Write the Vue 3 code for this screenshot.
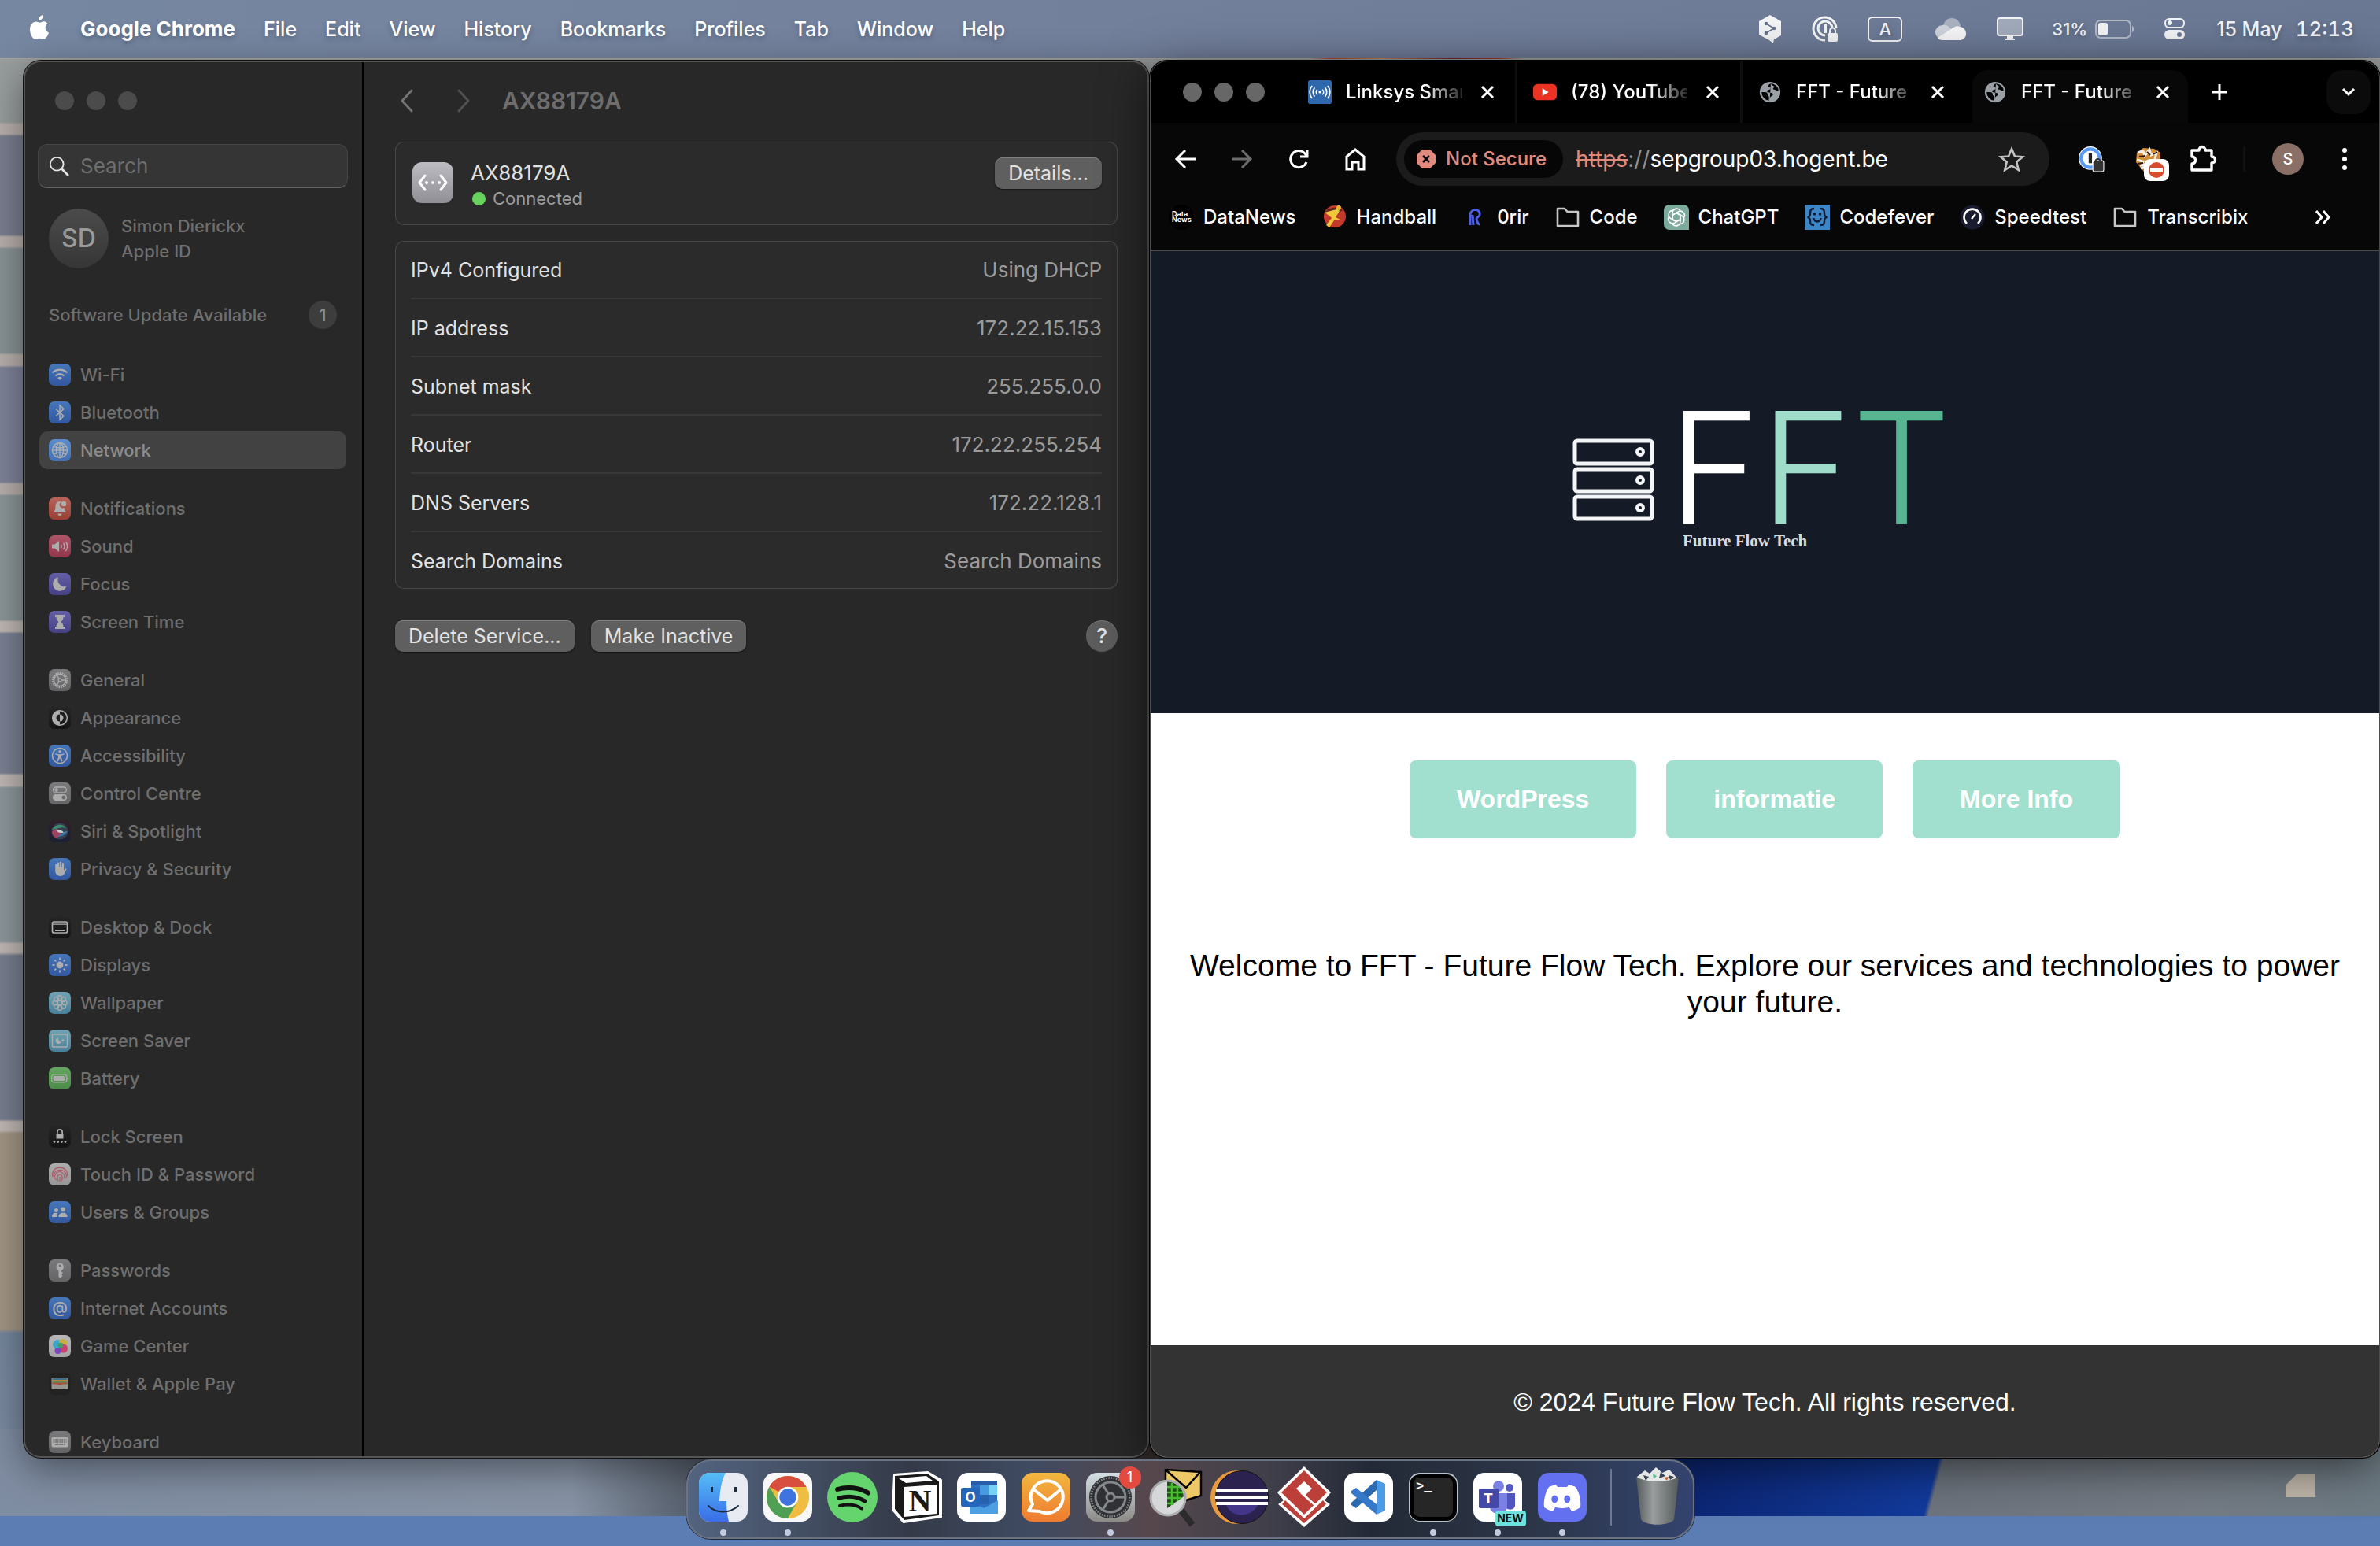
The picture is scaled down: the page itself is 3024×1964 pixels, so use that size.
<script setup>
const menus = ['File', 'Edit', 'View', 'History', 'Bookmarks', 'Profiles', 'Tab', 'Window', 'Help']

const g = {
  wifi: '<g fill="none" stroke="currentColor" stroke-width="2.4"><path d="M4.5 11.5a13.5 13.5 0 0 1 19 0"/><path d="M8.5 15.5a8 8 0 0 1 11 0"/></g><path d="M11.2 18.2a4 4 0 0 1 5.6 0L14 21z"/>',
  bluetooth: '<path d="M9 9.5l10 9-5 4.500V5l5 4.500-10 9" fill="none" stroke="currentColor" stroke-width="1.500"/>',
  globe: '<g fill="none" stroke="currentColor" stroke-width="1.400"><circle cx="14" cy="14" r="9.500"/><ellipse cx="14" cy="14" rx="4.500" ry="9.500"/><path d="M14 4.500v19M4.500 14h19M6 9c5 2.500 11 2.500 16 0M6 19c5-2.500 11-2.500 16 0"/></g>',
  bell: '<path d="M14 5c-4 0-5.500 3-5.500 6.500 0 4-1 5.500-3 7.500h17c-2-2-3-3.500-3-6a4 4 0 0 1-3.500-7.500A6 6 0 0 0 14 5zM11.500 20.500h5a2.500 2.500 0 0 1-5 0z"/><circle cx="19" cy="8" r="3.200"/>',
  sound: '<path d="M4 11.500h3.500L13 7v14l-5.500-4.500H4z"/><g fill="none" stroke="currentColor" stroke-width="1.500"><path d="M15.500 12a3.500 3.500 0 0 1 0 4M18.500 10a6.500 6.500 0 0 1 0 8M21.500 8a10 10 0 0 1 0 12"/></g>',
  moon: '<path d="M12 5a9 9 0 1 0 10.500 12A9 9 0 0 1 12 5z"/>',
  hourglass: '<path d="M8 5h12v3h-1.500c0 3-1.500 4.500-3 6 1.500 1.500 3 3 3 6H20v3H8v-3h1.500c0-3 1.500-4.500 3-6-1.500-1.500-3-3-3-6H8z"/>',
  gear: '<g fill="none" stroke="currentColor"><circle cx="14" cy="14" r="9" stroke-width="2.400" stroke-dasharray="1.700 1.100"/><circle cx="14" cy="14" r="7.500" stroke-width="1.400"/><circle cx="14" cy="14" r="2" stroke-width="1.300"/><path d="M16 14h6M13 12.300L10 7M13 15.700L10 21" stroke-width="1.300"/></g>',
  appearance: '<circle cx="14" cy="14" r="9.300" fill="none" stroke="currentColor" stroke-width="1.600"/><path d="M14 4.700a9.300 9.300 0 0 0 0 18.600v-4.800a4.500 4.500 0 0 1 0-9z"/><path d="M14 9.500a4.500 4.500 0 0 1 0 9z"/>',
  access: '<circle cx="14" cy="14" r="9.500" fill="none" stroke="currentColor" stroke-width="1.600"/><circle cx="14" cy="8.800" r="1.700"/><path d="M8.500 11.300l4 .9h3l4-.9.300 1.300-3.800 1.200v2.500l1.500 4.700-1.300.5L14 17l-2.200 4.500-1.300-.5 1.500-4.700v-2.500l-3.800-1.200z"/>',
  control: '<rect x="5.500" y="6" width="17" height="7" rx="3.500" fill="none" stroke="currentColor" stroke-width="1.300"/><circle cx="9.500" cy="9.500" r="2.200"/><path fill-rule="evenodd" d="M9 15h10a4 4 0 0 1 0 8H9a4 4 0 0 1 0-8zm10 1.500a2.500 2.500 0 1 0 0 5 2.500 2.500 0 0 0 0-5z"/>',
  siri: '<circle cx="14" cy="14" r="10.500" fill="#34404f"/><path d="M4 12c3-7 14-9 18-2-6-2-10 1-18 2z" fill="#3d8a72"/><path d="M4 15c4-6 8-4 11-1 2 4-3 9-6 8-3-1-5-4-5-7z" fill="#a0405f"/><path d="M24 14c-3 5-9 8-13 6 5-1 6-6 13-6z" fill="#3a79a8"/><path d="M9 12.500c4-1 8 0 10 3-4 1-7 1-10-3z" fill="#c4cfd2"/>',
  hand: '<path d="M8.200 13V8.500a1.100 1.100 0 0 1 2.200 0V12h.6V6.300a1.200 1.200 0 0 1 2.300 0V12h.6V5.300a1.200 1.200 0 0 1 2.300 0V12h.6V7a1.100 1.100 0 0 1 2.200 0v8.500l1.500-1.800c1-1 2.400-.2 1.800 1-1.500 3-3 8.300-7.300 8.300-4.500 0-6.800-3-6.800-7z"/>',
  dock: '<rect x="4.500" y="7" width="19" height="14" rx="2" fill="none" stroke="currentColor" stroke-width="1.700"/><path d="M5 9.500h18v1.200H5zM8 17h12v2H8z"/>',
  sun: '<circle cx="14" cy="14" r="4.400"/><path d="M14 4.500v3M14 20.500v3M4.500 14h3M20.500 14h3M7.300 7.300l2 2M18.700 18.700l2 2M20.700 7.300l-2 2M7.300 20.700l2-2" stroke="currentColor" stroke-width="1.800"/>',
  flower: '<g fill="none" stroke="currentColor" stroke-width="1.200"><circle cx="14" cy="14" r="2.800"/><circle cx="14" cy="7.700" r="3"/><circle cx="14" cy="20.300" r="3"/><circle cx="7.700" cy="14" r="3"/><circle cx="20.300" cy="14" r="3"/><circle cx="9.500" cy="9.500" r="3"/><circle cx="18.500" cy="9.500" r="3"/><circle cx="9.500" cy="18.500" r="3"/><circle cx="18.500" cy="18.500" r="3"/></g>',
  saver: '<rect x="4.500" y="6" width="19" height="16" rx="1" fill="none" stroke="currentColor" stroke-width="1.400"/><path d="M12 10a4 4 0 1 0 4 6 5 5 0 0 1-4-6zM18 11l.7 1.800 1.800.7-1.800.7-.7 1.800-.7-1.800-1.800-.7 1.800-.7z"/>',
  battery: '<rect x="3.700" y="9" width="19" height="10" rx="3" fill="none" stroke="currentColor" stroke-width="1.200"/><rect x="5.700" y="11" width="14.500" height="6" rx="1.500"/><path d="M23.500 12v4l1.800-2z"/>',
  lock: '<path fill-rule="evenodd" d="M10 10V8a4 4 0 0 1 8 0v2h.5v6.500h-9V10zm1.700 0h4.600V8a2.300 2.300 0 0 0-4.600 0z"/><circle cx="7" cy="20.500" r="1.400"/><circle cx="11.700" cy="20.500" r="1.400"/><circle cx="16.400" cy="20.500" r="1.400"/><circle cx="21" cy="20.500" r="1.400"/>',
  touch: '<g fill="none" stroke="#b05a68" stroke-width="1.200"><path d="M5 17a9.500 9.500 0 1 1 18.500-1M7 19a8 7.500 0 1 1 14.500 0M9.500 21a6 6 0 1 1 9.500-1.500M12 22.500c-1.500-3-2-8 2-8s3.500 4 2.500 7.500M14 17v6M6 9a10 9 0 0 1 16 0"/></g>',
  users: '<circle cx="18" cy="10.500" r="3"/><path d="M12.300 20c0-7 11.400-7 11.400 0z"/><circle cx="9.500" cy="11.500" r="2.500"/><path d="M4 20c0-5 4-6 7.500-4.700-1 1.200-1.200 3-1.200 4.700z"/>',
  key: '<path fill-rule="evenodd" d="M14 4.500a5 5 0 0 1 2 9.500v1.500l2 1.800-2 1.700 1.500 1.800-3 3-2-1.800v-8A5 5 0 0 1 14 4.500zm0 1.700a1.500 1.500 0 1 0 0 3 1.500 1.500 0 0 0 0-3z"/>',
  at: '<text x="14" y="20" text-anchor="middle" font-size="20" font-family="Inter, sans-serif">@</text>',
  game: '<circle cx="11" cy="12" r="6" fill="#3ca7c9"/><circle cx="18" cy="10" r="5" fill="#c5b23a"/><circle cx="18.500" cy="17" r="5.500" fill="#c74472"/><circle cx="11.500" cy="20" r="4" fill="#7b47bd"/><circle cx="15" cy="13" r="3.200" fill="#3f9e63"/>',
  wallet: '<rect x="3.500" y="6" width="21" height="15" rx="1.500" fill="#96968e"/><path d="M4.500 7h19v2h-19z" fill="#3f7291"/><path d="M4.500 9h19v2h-19z" fill="#b08636"/><path d="M4.500 11h19v2h-19z" fill="#5c8e50"/><path d="M4.500 12.500h19v2H17l-3 1.500-3-1.500H4.500z" fill="#a9503f"/>',
  keyboard: '<rect x="3.500" y="7.500" width="21" height="13" rx="2"/><path d="M5.500 11h17M5.500 14h17M8 17.300h12" stroke="#6c6c6e" stroke-width="1.500" stroke-dasharray="1.800 .9"/>',
}
const blue = ['#4577b8', '#33579f'], grey = ['#7a7a7c', '#646466'], dark = ['#262626', '#141414'], sky = ['#72a3b3', '#47809a'], violet = ['#645fa5', '#464187']
const groups = [
  [['Wi-Fi', 'wifi', blue], ['Bluetooth', 'bluetooth', blue], ['Network', 'globe', ['#5b8ccc', '#4370b4']]],
  [['Notifications', 'bell', ['#b8645a', '#983f34']], ['Sound', 'sound', ['#ae566a', '#92354a']], ['Focus', 'moon', violet], ['Screen Time', 'hourglass', violet]],
  [['General', 'gear', grey], ['Appearance', 'appearance', dark], ['Accessibility', 'access', blue], ['Control Centre', 'control', grey], ['Siri & Spotlight', 'siri', ['#30202a', '#1b2033']], ['Privacy & Security', 'hand', blue]],
  [['Desktop & Dock', 'dock', dark], ['Displays', 'sun', blue], ['Wallpaper', 'flower', sky], ['Screen Saver', 'saver', sky], ['Battery', 'battery', ['#64a65f', '#4a8b48']]],
  [['Lock Screen', 'lock', dark], ['Touch ID & Password', 'touch', ['#acacac', '#969696']], ['Users & Groups', 'users', blue]],
  [['Passwords', 'key', grey], ['Internet Accounts', 'at', blue], ['Game Center', 'game', ['#b8b8b8', '#a4a4a4']], ['Wallet & Apple Pay', 'wallet', ['#222222', '#222222']]],
  [['Keyboard', 'keyboard', grey]],
]

const details = [
  ['IPv4 Configured', 'Using DHCP'],
  ['IP address', '172.22.15.153'],
  ['Subnet mask', '255.255.0.0'],
  ['Router', '172.22.255.254'],
  ['DNS Servers', '172.22.128.1'],
  ['Search Domains', 'Search Domains'],
]

const globeTab = '<circle cx="16" cy="16" r="14" fill="#9aa0a6"/><path d="M17 4.500c-3 1-4 3-3 4.500s3 0 3 2-5 1.500-5 4 6 1 7.500 3-1 3-2.500 4-1 3-1.500 5.500M4.500 16h5c2 0 3 1 3 3s2 1.500 2 4v4.500A11.500 11.500 0 0 1 4.500 16zM17 4.500c6 .5 10 4 10.500 9-2 2-4-1-6-1s-2-2 0-3-3-2-4.500-5z" fill="#030303"/>'
const tabs = [
  ['Linksys Smar', '<rect width="32" height="32" rx="3" fill="#2f68ac"/><g fill="none" stroke="#fff" stroke-width="1.800"><path d="M12.500 12.500a5 5 0 0 0 0 7M19.500 12.500a5 5 0 0 1 0 7M9 10a9 9 0 0 0 0 12M23 10a9 9 0 0 1 0 12M5.500 7.500a13 13 0 0 0 0 17M26.500 7.500a13 13 0 0 1 0 17"/></g><circle cx="16" cy="16" r="1.700" fill="#fff"/>'],
  ['(78) YouTube', '<rect y="5" width="32" height="22" rx="6" fill="#ea3323"/><path d="M12.500 11l8.500 5-8.500 5z" fill="#fff"/>'],
  ['FFT - Future', globeTab],
  ['FFT - Future', globeTab],
]

const folder = '<path d="M3 5h9l3.500 4H29v18H3z" fill="none" stroke="#c7c7c7" stroke-width="2.600" stroke-linejoin="round"/>'
const petal = [0, 60, 120, 180, 240, 300].map((a) => `<path d="M16 10.500l5 3v8a5.500 5.500 0 0 1-10 3" transform="rotate(${a} 16 16)"/>`).join('')
const bookmarks = [
  ['DataNews', '<circle cx="16" cy="16" r="16" fill="#000"/><text x="4" y="15" font-size="9" font-weight="700" font-family="Inter, sans-serif" fill="#fff">Data</text><text x="4" y="22" font-size="9" font-weight="700" font-family="Inter, sans-serif" fill="#fff">News</text>'],
  ['Handball', '<circle cx="16" cy="15" r="14" fill="#c3392b"/><path d="M4 9C9 3 22 2 26 7L15 14z" fill="#5d2620"/><path d="M4 10c6-3 11-2 15-5l3 3-5 8 6 3-8 1-6 9-4-3 7-9c-3-4-6-4-8-7z" fill="#f1c83c"/><circle cx="21" cy="4" r="3" fill="#e8b736"/>'],
  ['0rir', '<path d="M10 26V13c0-9 14-8 12 0-.5 3-4 3-4 5s2 7 4 7M14 26l-1-13" fill="none" stroke="#4c5fe6" stroke-width="3"/>'],
  ['Code', folder],
  ['ChatGPT', `<path d="M7 0h18a7 7 0 0 1 7 7v25H7a7 7 0 0 1-7-7V7a7 7 0 0 1 7-7z" fill="#7caa9d"/><g fill="none" stroke="#fff" stroke-width="1.600">${petal}</g>`],
  ['Codefever', '<rect width="32" height="32" fill="#3c86c8"/><g fill="none" stroke="#0c1b33" stroke-width="2.400"><path d="M12 5C5 5 8 11 6.500 14L4.500 16l2 2C8 21 5 26 12 26M20 5c7 0 4 6 5.500 9l2 2-2 2C24 21 27 26 20 26M11.500 17a4.500 4.500 0 0 0 9 0"/></g><circle cx="12.500" cy="12" r="1.800" fill="#0c1b33"/><circle cx="19.500" cy="12" r="1.800" fill="#0c1b33"/>'],
  ['Speedtest', '<circle cx="16" cy="16" r="15.500" fill="#1a1b2e"/><path d="M9 24a10.500 10.500 0 1 1 14 0" fill="none" stroke="#fff" stroke-width="2.600"/><path d="M15 18l5-6" stroke="#fff" stroke-width="2.400"/>'],
  ['Transcribix', folder],
]

const tile = (fill) => `<rect x="1" y="1" width="62" height="62" rx="14" fill="${fill}"/>`
const dock = [
  { name: 'Finder', run: true, art: tile('#e8ecf2') + '<path d="M15 1h20c-5 9-7 20-8 36h9c0 10 1 18 3 26H15A14 14 0 0 1 1 49V15A14 14 0 0 1 15 1z" fill="url(#finder)"/><g fill="none" stroke="#1c2b3f" stroke-width="2" stroke-linecap="round"><path d="M13 43c10 10 27 10 38 0"/></g><path d="M16 19h3v7h-3zM46 19h3v7h-3z" fill="#1c2b3f"/>' },
  { name: 'Google Chrome', run: true, art: tile('#f7f7f7') + '<circle cx="32" cy="32" r="27" fill="#efbd42"/><path d="M32 32L8.600 18.500A27 27 0 0 1 55.400 18.500z" fill="#d94f3f"/><path d="M8.600 18.500A27 27 0 0 0 32 59l11.700-20.200L32 32 20.300 38.700z" fill="#4f9f54"/><path d="M32 19h23.600A27 27 0 0 1 32 59l12-21z" fill="#efbd42"/><circle cx="32" cy="32" r="13.300" fill="#fff"/><circle cx="32" cy="32" r="10.700" fill="#3f74e0"/>' },
  { name: 'Spotify', art: '<circle cx="32" cy="32" r="32" fill="#65d46e"/><g fill="none" stroke="#111" stroke-linecap="round"><path d="M13 22c13-4 28-2 39 4.500" stroke-width="6"/><path d="M15 33c11-3 23-2 33 4" stroke-width="5"/><path d="M16 43c10-2.500 20-1.500 28 3.500" stroke-width="4"/></g>' },
  { name: 'Notion', art: '<path d="M3 3L46 0l17 10v47L15 64 1 48z" fill="#fff" stroke="#fff" stroke-width="2" stroke-linejoin="round"/><path d="M4 5L45 2l15 10v43L16 61 4 47z" fill="#191919"/><path d="M9 8l35-3 8 6-34 3zM16 19l41-3v37l-41 4z" fill="#fff"/><text x="36" y="50" text-anchor="middle" font-size="40" font-weight="700" font-family="Liberation Serif, serif" fill="#191919">N</text>' },
  { name: 'Outlook', art: tile('#fff') + '<rect x="19" y="11" width="33" height="38" fill="#2f6fc2"/><path d="M19 11h33v6H19z" fill="#2a5ba8"/><path d="M30 17h11v12H30z" fill="#469be0"/><path d="M41 17h11v12H41z" fill="#77d0f8"/><path d="M19 29h22v12H19z" fill="#2762b0"/><path d="M17 36l18 10 18-10v17H17z" fill="#4c9fe2"/><rect x="6" y="20" width="24" height="24" rx="2" fill="#2566bd"/><text x="18" y="38" text-anchor="middle" font-size="17" font-weight="700" font-family="Inter, sans-serif" fill="#fff">O</text>' },
  { name: 'eM Client', art: tile('url(#canary)') + '<g fill="none" stroke="#fff" stroke-width="4" stroke-linejoin="round"><path d="M15 41a20.500 20.500 0 1 1 9 9l-14-1z"/><path d="M16 22l18 14 17-14"/></g>' },
  { name: 'System Settings', run: true, badge: '1', art: tile('url(#steel)') + '<circle cx="32" cy="32" r="27" fill="#2f3134"/><g fill="none" stroke="#85888b"><circle cx="32" cy="32" r="24.500" stroke-width="2.500" stroke-dasharray="1.600 1.600"/><circle cx="32" cy="32" r="19" stroke-width="3"/><circle cx="32" cy="32" r="5" stroke-width="3"/><path d="M37 32h15M29.500 27.700L22 16M29.500 36.300L22 48" stroke-width="3"/></g>' },
  { name: 'Postbox', art: '<path d="M20-3l45 3v30L20 44z" fill="#ecc966" stroke="#000" stroke-width="2.500"/><path d="M21-2l25 22L64 0" fill="none" stroke="#000" stroke-width="2.500"/><path d="M40 49l14 18" stroke="#2b2b2b" stroke-width="8"/><circle cx="23" cy="33" r="22" fill="#d6d7d8"/><path d="M22 12c12 1 20 8 21 19L22 46z" fill="#1d4f12"/><path d="M22 19h16M22 26h20M22 33h18M22 40h9M28 14v28M35 17v20" stroke="#49bd31" stroke-width="2.600"/><circle cx="23" cy="33" r="22" fill="none" stroke="#a9abad" stroke-width="3"/>' },
  { name: 'Eclipse', art: '<circle cx="29" cy="32" r="34" fill="#e89a3f"/><circle cx="35" cy="32" r="33.500" fill="#2b2250" stroke="#111" stroke-width="1"/><path d="M15 42h40c-6 15-33 18-40 0z" fill="#44348a"/><path d="M2 22h66v4H2zM1 30h67v4H1zM2 38h66v4H2z" fill="#fff"/>' },
  { name: 'Visual Paradigm', art: '<path d="M32-7l34 33-8 10 7 5L32 70-1 41l7-5-8-10z" fill="#fff"/><path d="M32-2L3 26l29 28 29-28z" fill="#bc3f39"/><path d="M8 36l-4 5 28 24 28-24-4-5-24 23z" fill="#bc3f39"/><path d="M32 12l10 9-10 10-10-10z" fill="#fff"/><path d="M28 26l19 17" stroke="#fff" stroke-width="3"/>' },
  { name: 'Visual Studio Code', art: tile('#fff') + '<path d="M42 10l11 5v34l-11 5z" fill="#4a9be8"/><path d="M42 10v13L16 46l-6-4v-3z" fill="#2a6ab0"/><path d="M42 54V41L16 20l-6 4v3z" fill="#3779c9"/>' },
  { name: 'Terminal', run: true, art: tile('#b8c4c9') + '<rect x="2" y="3" width="60" height="59" rx="13" fill="#000"/><rect x="7" y="7" width="50" height="50" rx="8" fill="#262626"/><text x="10" y="23" font-size="17" font-weight="700" font-family="Liberation Mono, monospace" fill="#fff">&gt;_</text>' },
  { name: 'Microsoft Teams', run: true, isNew: true, art: tile('#fff') + '<circle cx="47" cy="20" r="5" fill="#5558c0"/><path d="M40 27h14v15c0 7-9 7-12 3z" fill="#5054be"/><circle cx="33" cy="18" r="7" fill="#7c82e2"/><path d="M22 27h22v17c0 12-22 12-22 0z" fill="#7a80e4"/><rect x="8" y="21" width="25" height="25" rx="2" fill="#4449a8"/><text x="20" y="40" text-anchor="middle" font-size="18" font-weight="700" font-family="Inter, sans-serif" fill="#fff">T</text>' },
  { name: 'Discord', run: true, art: tile('#6370f0') + '<path fill-rule="evenodd" d="M24 16c-5 1-9 3-9 3-5 8-7 17-6 26 6 4 11 5 11 5l3-5-4-2c8 4 18 4 26 0l-4 2 3 5s5-1 11-5c1-9-1-18-6-26 0 0-4-2-9-3l-2 3h-12zm0 14a4 5 0 1 0 0 9 4 5 0 0 0 0-9zm16 0a4 5 0 1 0 0 9 4 5 0 0 0 0-9z" fill="#fff"/>' },
]
</script>

<template>
  <div class="desktop">
    <div class="wallpaper"></div>

    <header class="menubar">
      <svg class="apple" viewBox="0 0 26 32"><path d="M18 0c.3 3.500-2.500 7-6 7C11.600 3.700 14.500.5 18 0zM23.500 11c-4.500 3-3.500 9.500 1.500 11.500-1 3.500-3.800 8.500-7 8.500-2 0-2.700-1.200-5-1.200S9.800 31 8 31C4.500 31 1 24 1 18.500 1 12 5 8.500 8.800 8.500c2 0 3.500 1.300 4.700 1.300 1.300 0 3-1.500 5.500-1.500 2 0 3.600 1.200 4.500 2.700z" fill="#fff" /></svg>
      <strong>Google Chrome</strong>
      <nav class="menus"><a v-for="m in menus" :key="m" href="#">{{ m }}</a></nav>
      <div class="status">
        <svg class="s-hex" viewBox="0 0 30 36"><path d="M15 0l14 8v18l-9 5-1 5-5-4L1 25V8z" fill="#f3f4f6" /><path d="M10 11l10 6-10 6" fill="none" stroke="#66738d" stroke-width="1.500" /><g fill="#66738d"><circle cx="10" cy="11" r="2.300" /><circle cx="20" cy="17" r="2.300" /><circle cx="10" cy="23" r="2.300" /></g></svg>
        <svg class="s-pass" viewBox="0 0 34 34"><g fill="none" stroke="#f3f4f6"><path d="M17 31A14.500 14.500 0 1 1 31 16" stroke-width="3" /><path d="M17 25A9 9 0 1 1 26 16" stroke-width="3" /><path d="M17 10v12" stroke-width="4" /></g><rect x="20" y="22" width="13" height="11" rx="2" fill="#f3f4f6" /><path d="M23 22v-3a3.500 3.500 0 0 1 7 0v3" fill="none" stroke="#f3f4f6" stroke-width="2" /></svg>
        <span class="s-kbd">A</span>
        <svg class="s-cloud" viewBox="0 0 40 28"><circle cx="21" cy="11" r="11" fill="#aab2c2" /><path d="M9 9a9 9 0 0 1 9 3l14 15H9A9 9 0 0 1 9 9z" fill="#cfd4dc" /><path d="M3 25l20-13c3-2 6-2 8-1 9 0 12 15 1 17H9c-3 0-5-1-6-3z" fill="#f6f6f8" /></svg>
        <svg class="s-display" viewBox="0 0 34 30"><rect x="1" y="1" width="32" height="22" rx="3" fill="#a1aabb" stroke="#f3f4f6" stroke-width="2" /><path d="M13 23h8v4h2v2H11v-2h2z" fill="#f3f4f6" /></svg>
        <span class="s-batt">31%<svg viewBox="0 0 50 24"><rect x="1" y="1" width="44" height="22" rx="6" fill="none" stroke="#b3bac8" stroke-width="2" /><rect x="4" y="4" width="12" height="16" rx="3" fill="#f3f4f6" /><path d="M47 8c3 1 3 7 0 8z" fill="#b3bac8" /></svg></span>
        <svg class="s-cc" viewBox="0 0 26 28"><rect x="1" y="1" width="24" height="11" rx="5" fill="none" stroke="#f3f4f6" stroke-width="2" /><circle cx="7" cy="6" r="3" fill="#f3f4f6" /><path fill-rule="evenodd" d="M6 15h14a6 6 0 0 1 0 12H6a6 6 0 0 1 0-12zm13 3a3 3 0 1 0 0 6 3 3 0 0 0 0-6z" fill="#f3f4f6" /></svg>
        <time>15 May</time><time class="clock">12:13</time>
      </div>
    </header>

    <main class="workspace">
      <section class="window settings" aria-label="Network settings">
        <aside class="sidebar">
          <div class="lights"><i></i><i></i><i></i></div>
          <label class="search">
            <svg viewBox="0 0 28 28"><circle cx="11" cy="11" r="9" fill="none" stroke="#e4e4e4" stroke-width="2" /><path d="M18 18l8 8" stroke="#e4e4e4" stroke-width="3" stroke-linecap="round" /></svg>
            <input type="text" placeholder="Search" aria-label="Search" />
          </label>
          <a class="account" href="#">
            <span class="avatar">SD</span>
            <span class="who">Simon Dierickx<br />Apple ID</span>
          </a>
          <a class="update" href="#">Software Update Available<b>1</b></a>
          <nav class="groups">
            <ul v-for="(items, i) in groups" :key="i">
              <li v-for="[label, icon, [from, to]] in items" :key="label">
                <a href="#" :class="{ current: label === 'Network' }">
                  <svg class="pane-icon" viewBox="0 0 28 28" :style="{ background: `linear-gradient(${from}, ${to})` }" v-html="g[icon]"></svg>
                  {{ label }}
                </a>
              </li>
            </ul>
          </nav>
        </aside>

        <div class="pane">
          <div class="pane-head">
            <button aria-label="Back"><svg viewBox="0 0 18 30"><path d="M15 2L3 15l12 13" /></svg></button>
            <button aria-label="Forward" class="off"><svg viewBox="0 0 18 30"><path d="M3 2l12 13L3 28" /></svg></button>
            <h1>AX88179A</h1>
          </div>
          <div class="card service">
            <svg class="service-icon" viewBox="0 0 52 52"><rect width="52" height="52" rx="12" fill="url(#service)" /><g fill="none" stroke="#fff" stroke-width="3" stroke-linecap="round" stroke-linejoin="round"><path d="M16 17L9 26l7 9M36 17l7 9-7 9" /></g><g fill="#fff"><circle cx="18" cy="26" r="2" /><circle cx="26" cy="26" r="2" /><circle cx="34" cy="26" r="2" /></g></svg>
            <div class="service-name">AX88179A<span><i></i>Connected</span></div>
            <button class="push">Details...</button>
          </div>
          <dl class="card">
            <div v-for="[k, v] in details" :key="k"><dt>{{ k }}</dt><dd>{{ v }}</dd></div>
          </dl>
          <div class="actions">
            <button class="push">Delete Service...</button>
            <button class="push">Make Inactive</button>
            <button class="help" aria-label="Help">?</button>
          </div>
        </div>
      </section>

      <section class="window browser" aria-label="Browser">
        <div class="tabstrip">
          <div class="lights"><i></i><i></i><i></i></div>
          <div class="tabs">
            <div v-for="([title, art], i) in tabs" :key="i" class="tab" :class="{ active: i === 3, ruled: i < 2 }">
              <svg viewBox="0 0 32 32" v-html="art"></svg>
              <span>{{ title }}</span>
              <button aria-label="Close tab"><svg viewBox="0 0 20 20"><path d="M3 3l14 14M17 3L3 17" /></svg></button>
            </div>
          </div>
          <button class="newtab" aria-label="New tab"><svg viewBox="0 0 20 20"><path d="M10 0v20M0 10h20" /></svg></button>
          <button class="tabsearch" aria-label="Search tabs"><svg viewBox="0 0 20 20"><path d="M3 6l7 7 7-7" /></svg></button>
        </div>

        <div class="toolbar">
          <button aria-label="Back"><svg viewBox="0 0 28 28"><path d="M27 14H3M14 3L3 14l11 11" /></svg></button>
          <button aria-label="Forward" class="off"><svg viewBox="0 0 28 28"><path d="M1 14h24M14 3l11 11-11 11" /></svg></button>
          <button aria-label="Reload"><svg viewBox="0 0 28 28"><path d="M24 18a10.500 10.500 0 1 1-2-11l2 3M25 2v9h-9" /></svg></button>
          <button aria-label="Home"><svg viewBox="0 0 28 28"><path d="M3 11L14 2l11 9v16h-7v-9h-8v9H3z" /></svg></button>
          <div class="omnibox">
            <button class="chip"><svg viewBox="0 0 24 24"><path d="M7 0h10l7 7v10l-7 7H7l-7-7V7z" fill="#e0897f" /><path d="M8 8l8 8M16 8l-8 8" stroke="#0a0a0a" stroke-width="2.500" /></svg>Not Secure</button>
            <label class="url"><s>https</s><em>://</em><input type="text" value="sepgroup03.hogent.be" aria-label="Address" /></label>
            <button aria-label="Bookmark this tab" class="star"><svg viewBox="0 0 32 32"><path d="M16 3l4 9.500 10 .8-7.700 6.500L24.700 30 16 24.500 7.300 30l2.400-10.200L2 13.300l10-.8z" fill="none" stroke="#c4c4c4" stroke-width="2.600" /></svg></button>
          </div>
          <div class="extensions">
            <svg class="x32" viewBox="0 0 32 32"><circle cx="15" cy="15" r="14" fill="#fff" /><circle cx="15" cy="15" r="11" fill="#fff" stroke="#5b9bf3" stroke-width="4" /><path d="M15 9v12" stroke="#222" stroke-width="4" /><rect x="18" y="18" width="13" height="13" rx="2" fill="#333" stroke="#fff" /><path d="M21 21v-2a3 3 0 0 1 6 0v2" fill="none" stroke="#333" stroke-width="2" /></svg>
            <svg class="tiger" viewBox="0 0 44 44"><path d="M3 8l8-6 14 1 8 5-1 22-20 2-10-12z" fill="#d58a35" /><path d="M4 8l7-2 2 6 6-8 2 7 7-3-2 8M3 17l8 2-2 5 7-1M8 28l9-3" fill="none" stroke="#f4f0e8" stroke-width="3" /><path d="M6 13l8-1M16 7l4 4M4 22l7-1M24 10l5-3" stroke="#2a1a0c" stroke-width="2" /><rect x="12" y="16" width="32" height="28" rx="8" fill="#fff" /><circle cx="28" cy="30" r="10" fill="#d84b2f" /><rect x="20" y="27" width="16" height="5" fill="#fff" /></svg>
            <svg class="x32" viewBox="0 0 34 34"><path d="M3 6h9c0-6 8-6 8 0h8v8c6 0 6 8 0 8v9H3v-8c6 0 6-9 0-9z" fill="none" stroke="#fff" stroke-width="3.400" stroke-linejoin="round" /></svg>
            <span class="rule"></span>
            <span class="profile">S</span>
            <button aria-label="Menu"><svg viewBox="0 0 28 28"><g fill="#fff" stroke="none"><circle cx="14" cy="3" r="3" /><circle cx="14" cy="14" r="3" /><circle cx="14" cy="25" r="3" /></g></svg></button>
          </div>
        </div>

        <nav class="bookmarks">
          <a v-for="[label, art] in bookmarks" :key="label" href="#"><svg viewBox="0 0 32 32" v-html="art"></svg>{{ label }}</a>
          <button aria-label="More bookmarks"><svg viewBox="0 0 20 20"><path d="M2 2l7 8-7 8M11 2l7 8-7 8" /></svg></button>
        </nav>

        <article class="site">
          <header class="hero">
            <svg class="servers" viewBox="0 0 104 106"><g fill="none" stroke="#f4f5f6" stroke-width="5"><rect x="3" y="3" width="98" height="29" rx="3" /><rect x="3" y="39" width="98" height="28" rx="3" /><rect x="3" y="74" width="98" height="28" rx="3" /><g stroke-width="4"><circle cx="86" cy="17" r="4" /><circle cx="86" cy="53" r="4" /><circle cx="86" cy="88" r="4" /></g></g></svg>
            <div class="brand">
              <div class="letters"><span>F</span><span class="mint">F</span><span class="green">T</span></div>
              <div class="tagline">Future Flow Tech</div>
            </div>
          </header>
          <nav class="site-nav"><a href="#">WordPress</a><a href="#">informatie</a><a href="#">More Info</a></nav>
          <p>Welcome to FFT - Future Flow Tech. Explore our services and technologies to power your future.</p>
          <footer>© 2024 Future Flow Tech. All rights reserved.</footer>
        </article>
      </section>
    </main>

    <div class="dock-area">
      <nav class="dock" aria-label="Dock">
        <button v-for="app in dock" :key="app.name" :aria-label="app.name" :class="{ run: app.run }">
          <svg viewBox="0 0 64 64" v-html="app.art"></svg>
          <b v-if="app.badge" class="count">{{ app.badge }}</b>
          <b v-if="app.isNew" class="new">NEW</b>
        </button>
        <span class="dock-rule"></span>
        <button aria-label="Bin">
          <svg viewBox="0 0 64 64"><path d="M6 6l10-8 6 4 8-8 8 7 9-4 11 12-6 6H10z" fill="#e6e8e8" /><path d="M14 4l7 2-4 5zM36 0l6 5-8 3zM46 4l7 2-5 4z" fill="#39434c" /><path d="M26 2l5 3-4 4z" fill="#5bbf8b" /><path d="M40 7l6-1-2 5z" fill="#c2633d" /><path d="M5 6c14 8 40 8 54 0l-6 54c-4 9-38 9-42 0z" fill="url(#bin)" /></svg>
        </button>
      </nav>
    </div>

    <svg class="defs" aria-hidden="true">
      <linearGradient id="finder" x2="0" y2="1"><stop stop-color="#55bdf6" /><stop offset="1" stop-color="#3a6de8" /></linearGradient>
      <linearGradient id="canary" x2="0" y2="1"><stop stop-color="#f3b73e" /><stop offset="1" stop-color="#ee7b30" /></linearGradient>
      <linearGradient id="steel" x2="0" y2="1"><stop stop-color="#d3dfe4" /><stop offset="1" stop-color="#8c8a86" /></linearGradient>
      <linearGradient id="service" x2="0" y2="1"><stop stop-color="#bdbcc2" /><stop offset="1" stop-color="#918f96" /></linearGradient>
      <linearGradient id="bin"><stop stop-color="#565b5b" /><stop offset=".4" stop-color="#9a9e9e" /><stop offset="1" stop-color="#555a5b" /></linearGradient>
    </svg>
  </div>
</template>

<style>
body { margin: 0; }
</style>

<style scoped>
* { box-sizing: border-box; }
.desktop {
  position: relative;
  display: grid;
  grid-template-rows: 74px minmax(0, 1fr) 112px;
  height: 100vh;
  overflow: hidden;
  font: 500 25px/32px Inter, sans-serif;
  color: #fff;
  background: #5b7db3;
}
button { padding: 0; border: 0; background: none; font: inherit; color: inherit; display: flex; align-items: center; justify-content: center; }
a { color: inherit; text-decoration: none; }
input { border: 0; padding: 0; background: none; font: inherit; color: inherit; min-width: 0; flex: 1; }
ul, dl, dd, h1, p { margin: 0; padding: 0; list-style: none; }
svg { display: block; flex: none; overflow: visible; }
.defs { position: absolute; width: 0; height: 0; }

.wallpaper {
  position: absolute;
  inset: 0 0 38px;
  background:
    linear-gradient(135deg, transparent 10px, #c0b7aa 11px) right 82px bottom 24px / 38px 30px no-repeat,
    linear-gradient(105deg, transparent 70%, #0b2470 70.200%, #123a9c 81%, transparent 81.200%) bottom / 100% 110px no-repeat,
    linear-gradient(90deg, #7f8da2 0, #8793a5 24%, #4d5561 30%, #3b3230 48%, #2c3a55 60%, #0b2470 70%, #6c737d 80%, #747b84 92%, #6e7b84 100%) bottom / 100% 110px no-repeat,
    linear-gradient(#989d9e 155px, #b8b0ac 158px 170px, #7b7f90 173px 298px, #b8b0ac 301px 313px, #8a9396 316px 448px, #b8b0ac 451px 464px, #80849a 467px 612px, #b8b0ac 615px 627px, #8c9698 630px 787px, #c0b8b5 790px 802px, #7c8294 805px 982px, #c0b8b5 985px 998px, #8e989c 1001px 1196px, #c0b8b5 1199px 1210px, #797f90 1214px 1422px, #c0b8b5 1425px 1436px, #a39786 1440px 1688px, #75869d 1694px, #7f8da2 1926px);
}

.menubar {
  position: relative;
  display: flex;
  align-items: center;
  padding: 0 33px 0 37px;
  background: linear-gradient(90deg, #7687a1, #73809c 48%, #6a7894);
  text-shadow: 0 3px 6px rgba(30, 40, 60, .35);
}
.apple { width: 26px; height: 32px; margin: 0 39px 4px 0; }
.menubar strong { font-size: 26px; font-weight: 700; }
.menus { display: flex; gap: 36px; margin-left: 36px; }
.status { display: flex; align-items: center; margin-left: auto; color: #f3f4f6; }
.s-hex { width: 30px; height: 36px; margin-right: 38px; }
.s-pass { width: 34px; height: 34px; margin-right: 37px; }
.s-kbd { width: 44px; height: 32px; border: 2px solid #f3f4f6; border-radius: 6px; font-size: 22px; line-height: 28px; text-align: center; margin-right: 42px; }
.s-cloud { width: 40px; height: 28px; margin-right: 38px; }
.s-display { width: 34px; height: 30px; margin-right: 36px; }
.s-batt { display: flex; align-items: center; gap: 10px; font-size: 22px; margin-right: 38px; }
.s-batt svg { width: 50px; height: 24px; }
.s-cc { width: 26px; height: 28px; margin-right: 40px; }
.status .clock { margin-left: 17px; font-size: 26px; font-variant-numeric: tabular-nums; }

.workspace {
  position: relative;
  display: grid;
  grid-template-columns: 1430fr 1563fr;
  gap: 1px;
  padding: 2px 0 0 30px;
  border-top: 1px solid;
  border-image: linear-gradient(90deg, #aaa5a0 55%, #b3402c 56%, #c08a60 58%, #6a2a24 61%, #a83a2a 63%, #aaa5a0 64%) 1;
}
.window { min-width: 0; min-height: 0; border: 2px solid #555; border-radius: 22px; overflow: hidden; }
.settings { display: flex; background: #282828; color: #e2e2e2; box-shadow: 0 0 0 1px #111, 0 14px 50px rgba(0, 0, 0, .45); }
.browser { position: relative; display: flex; flex-direction: column; background: #000; border: 1px solid #4c4c4c; box-shadow: 0 0 0 1px #000, 0 10px 60px rgba(0, 0, 0, .6); }

.lights { display: flex; align-items: center; gap: 16px; }
.lights i { width: 24px; height: 24px; border-radius: 50%; background: #4b4b4b; }

.sidebar { width: 430px; flex: none; border-right: 2px solid #000; padding: 0 18px 0 16px; overflow: hidden; color: #6f6f6f; font-size: 22px; }
.sidebar .lights { height: 97px; padding-left: 22px; }
.search { display: flex; align-items: center; gap: 14px; height: 56px; margin-top: 7px; padding: 0 13px; border: 1px solid #454545; border-bottom-color: #666; border-radius: 12px; background: #353535; font-size: 26px; font-weight: 400; }
.search svg { width: 26px; height: 26px; }
.search input::placeholder { color: #6e6e6e; opacity: 1; }
.account { display: flex; align-items: center; gap: 16px; margin: 26px 0 0 14px; }
.avatar { width: 76px; height: 76px; border-radius: 50%; background: linear-gradient(#4b4b4b, #363636); color: #9a9a9a; font-size: 32px; line-height: 76px; text-align: center; }
.update { display: flex; align-items: center; justify-content: space-between; margin: 41px 14px 0; }
.update b { width: 36px; height: 36px; border-radius: 50%; background: #3d3d3d; color: #8a8a8a; line-height: 36px; text-align: center; font-weight: 500; }
.groups { margin: 34px 2px 0; }
.groups ul + ul { margin-top: 26px; }
.groups a { display: flex; align-items: center; gap: 12px; height: 48px; padding-left: 12px; border-radius: 10px; white-space: nowrap; }
.groups a.current { background: #424242; color: #8c8c8c; }
.pane-icon { width: 28px; height: 28px; border-radius: 7px; color: #adadad; fill: currentColor; }

.pane { flex: 1; min-width: 0; padding: 0 38px 0 40px; font-size: 26px; font-weight: 400; }
.pane-head { display: flex; align-items: center; height: 97px; padding-left: 6px; }
.pane-head svg { width: 18px; height: 30px; fill: none; stroke: #737373; stroke-width: 3; stroke-linecap: round; stroke-linejoin: round; }
.pane-head .off { margin: 0 40px 0 54px; }
.pane-head .off svg { stroke: #505050; }
h1 { font-size: 30px; font-weight: 600; color: #6d6d6d; }
.card { border-radius: 11px; background: #2b2b2b; box-shadow: inset 0 0 0 1px #484848; padding: 0 20px; }
.service { display: flex; height: 106px; margin-top: 4px; }
.service-icon { width: 52px; height: 52px; margin: 26px 22px 0 2px; }
.service-name { padding-top: 24px; }
.service-name span { display: flex; align-items: center; gap: 9px; padding-left: 2px; font-size: 22px; color: #9b9b9b; }
.service-name i { width: 17px; height: 17px; border-radius: 50%; background: #67d35c; }
.push { height: 40px; padding: 0 17px; border-radius: 10px; background: #5f5f5f; box-shadow: inset 0 1px #808080, 0 1px 2px #111; font-size: 25px; }
.service .push { margin: 20px 0 0 auto; }
dl.card { margin-top: 20px; }
dl div { display: flex; align-items: center; justify-content: space-between; height: 72px; padding-top: 2px; }
dl div + div { height: 74px; border-top: 2px solid #383838; }
dt { font-size: 25px; }
dd { color: #9b9b9b; }
.actions { display: flex; gap: 21px; margin-top: 40px; }
.help { width: 40px; height: 40px; border-radius: 50%; background: #5c5c5c; box-shadow: inset 0 1px #777; margin-left: auto; font-weight: 500; }

.tabstrip { display: flex; align-items: center; height: 78px; flex: none; padding: 0 11px 0 41px; font-size: 24px; }
.tabstrip .lights i { background: #676767; }
.tabs { display: flex; margin-left: 35px; }
.tab { position: relative; display: flex; align-items: center; width: 286px; height: 78px; padding-left: 20px; }
.tab.ruled { border-right: 3px solid #0e0e0e; }
.tab > svg { width: 30px; height: 30px; }
.tab > span { width: 148px; margin-left: 18px; white-space: nowrap; mask-image: linear-gradient(90deg, #000 100px, transparent 156px); }
.tab > button { margin-left: 22px; }
.tab.active { isolation: isolate; }
.tab.active::before { content: ""; position: absolute; z-index: -1; inset: 11px 6px 0; border-radius: 20px 20px 0 0; background: #080808; }
.tabstrip button svg { width: 20px; height: 20px; fill: none; stroke: #fff; stroke-width: 3; }
.newtab { margin-left: 24px; }
.tabsearch { width: 56px; height: 56px; border-radius: 20px; background: #0b0b0b; margin-left: auto; }

.toolbar { display: flex; align-items: center; height: 92px; flex: none; padding: 0 30px; background: #070707; }
.toolbar > button { width: 28px; margin-right: 44px; }
.toolbar > button svg, .extensions button svg { width: 28px; height: 28px; fill: none; stroke: #fff; stroke-width: 3; }
.toolbar > button.off svg { stroke: #6c6c6c; }
.omnibox { display: flex; align-items: center; flex: 1; min-width: 0; height: 68px; border-radius: 34px; background: #1b1b1b; padding: 0 32px 0 10px; margin-left: -6px; }
.chip { height: 48px; border-radius: 24px; background: #060606; color: #e0897f; padding: 0 21px 0 16px; gap: 13px; font-size: 24px; }
.chip svg { width: 24px; height: 24px; }
.url { display: flex; flex: 1; min-width: 0; margin-left: 16px; font-size: 28px; font-weight: 400; }
.url s { color: #e0897f; text-decoration-thickness: 3px; }
.url em { font-style: normal; color: #8f8f8f; }
.star svg { width: 32px; height: 32px; }
.extensions { display: flex; align-items: center; margin-left: 36px; }
.x32 { width: 34px; height: 34px; }
.tiger { width: 44px; height: 44px; margin: 12px 26px 0 38px; }
.rule { width: 3px; height: 32px; background: #111; margin: 0 34px; }
.profile { width: 40px; height: 40px; border-radius: 50%; background: #8a6f66; font-size: 20px; line-height: 40px; text-align: center; margin-right: 38px; }
.extensions button { width: 28px; }

.bookmarks { display: flex; align-items: center; height: 71px; flex: none; padding: 0 62px 14px 23px; gap: 33px; background: #070707; border-bottom: 2px solid #494949; font-size: 24px; }
.bookmarks a { display: flex; align-items: center; gap: 12px; }
.bookmarks a svg { width: 32px; height: 32px; }
.bookmarks button { margin-left: auto; }
.bookmarks button svg { width: 20px; height: 20px; fill: none; stroke: #fff; stroke-width: 3; }

.site { flex: 1; min-height: 0; display: flex; flex-direction: column; background: #fff; color: #000; font-family: "Liberation Sans", Arial, sans-serif; font-weight: 400; text-align: center; }
.hero { display: flex; align-items: center; justify-content: center; gap: 36px; height: 587px; flex: none; padding-bottom: 5px; background: #141a26; color: #fff; }
.servers { width: 104px; height: 106px; }
.brand { width: 349px; text-align: left; }
.letters { display: flex; margin-left: -18px; font: 300 198px/144px Inter, sans-serif; }
.mint { color: #9fdcca; }
.green { color: #57b592; }
.tagline { margin-top: 9px; font: 700 21px/24px "Liberation Serif", serif; color: #d8dade; }
.site-nav { display: flex; justify-content: center; gap: 38px; margin-top: 60px; }
.site-nav a { padding: 31px 60px; border-radius: 8px; background: #a1e0cf; color: #fff; font-size: 32px; line-height: 37px; font-weight: 700; }
.site p { margin-top: 139px; padding: 0 40px; font-size: 39px; line-height: 46px; }
footer { margin-top: auto; height: 142px; background: #333; color: #fff; font-size: 32px; line-height: 144px; }

.dock-area { position: relative; display: flex; justify-content: center; align-items: flex-start; padding-top: 2px; }
.dock { display: flex; align-items: center; gap: 18px; height: 101px; padding: 0 13px 6px; border: 2px solid #6b7282; border-radius: 32px; background: linear-gradient(90deg, #536480, #343a48 22%, #3f4b62 34%, #56474c 46%, #3f3f4a 58%, #232936 68%, #2c3648 84%, #33436e); box-shadow: 0 0 0 1px #222a38; }
.dock button { position: relative; width: 64px; height: 64px; }
.dock svg { width: 64px; height: 64px; }
.dock .run::after { content: ""; position: absolute; left: 28px; bottom: -17px; width: 8px; height: 8px; border-radius: 50%; background: #c3cbe0; }
.count { position: absolute; top: -7px; right: -7px; width: 28px; height: 28px; border-radius: 50%; background: #e44b40; font-size: 18px; line-height: 28px; font-weight: 400; }
.new { position: absolute; right: -4px; bottom: -5px; width: 39px; height: 20px; border-radius: 4px; background: #6de2dd; color: #111; font-size: 14px; line-height: 20px; }
.dock-rule { width: 2px; height: 72px; margin: 0 8px 0 11px; background: #6d778f; }
</style>
